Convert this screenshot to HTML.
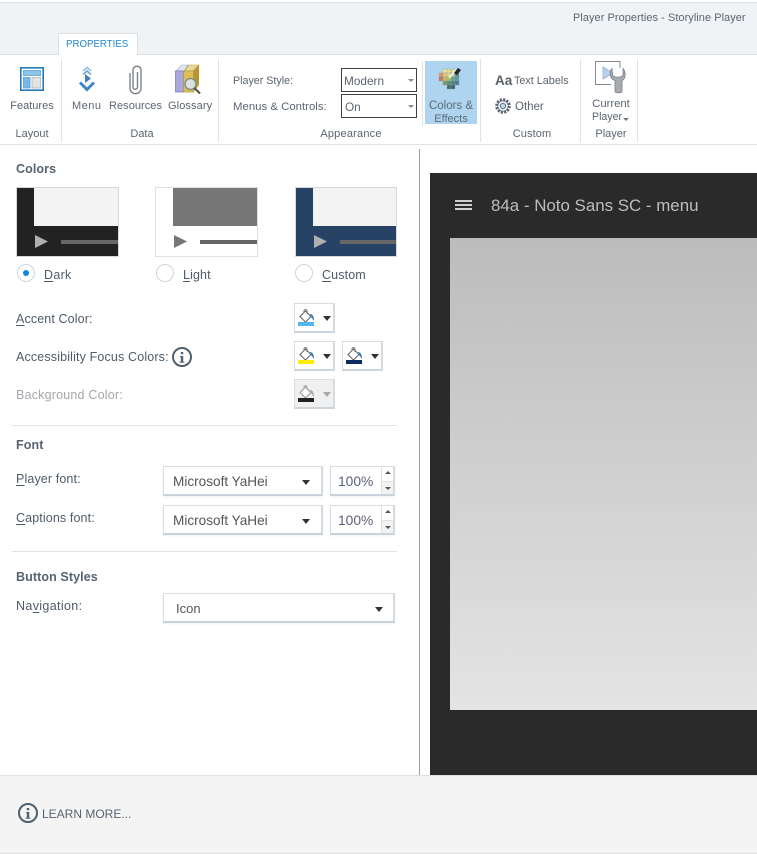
<!DOCTYPE html>
<html><head><meta charset="utf-8">
<style>
html,body{margin:0;padding:0;background:#fff}
#p{position:relative;width:757px;height:854px;overflow:hidden;background:#fff;font-family:"Liberation Sans",sans-serif;color:#4f5b68}
#p div,#p svg,#p span.t{position:absolute}
.t{white-space:nowrap;line-height:16px;height:16px;margin-top:1px}
.r{font-size:11px;color:#5b6570}
.c{text-align:center}
.l{font-size:12.5px;color:#4f5b68;letter-spacing:.12px}
.h{font-size:12.5px;font-weight:bold;color:#566472;letter-spacing:.1px}
.sel{border:1px solid #d8dde2;border-right:2px solid #d5dbe1;border-bottom:2px solid #c9d2da;background:#fff;box-sizing:border-box;box-shadow:0 1px 2px #eef1f4}
.btn{border:1px solid #d8dde2;border-right:2px solid #d5dbe1;border-bottom:2px solid #cdd5dc;background:#fff;box-sizing:border-box}
.car{width:0;height:0;border-left:4.5px solid transparent;border-right:4.5px solid transparent;border-top:5px solid #333}
.rs{border:1px solid #3f3f3f;background:#fff;box-sizing:border-box}
.sm{width:0;height:0;border-left:3px solid transparent;border-right:3px solid transparent;border-top:3px solid #8a8a8a}
.sep{width:1px;background:#dfe3e6;top:59px;height:83px}
.rad{width:18px;height:18px;border-radius:50%;border:1px solid #cdd6de;box-sizing:border-box;background:#fff;top:264px}
u{text-underline-offset:2px}
</style></head><body>
<div id="p">
<!-- title / tab strip -->
<div style="left:0;top:2px;width:757px;height:1px;background:#e2e5e8"></div>
<div style="left:0;top:3px;width:757px;height:51px;background:#f0f3f6"></div>
<div style="left:0;top:54px;width:757px;height:1px;background:#dce0e4"></div>
<span class="t r" style="left:573px;top:9px;font-size:11px;letter-spacing:.04px">Player Properties - Storyline Player</span>
<div style="left:58px;top:33px;width:80px;height:22px;background:#fff;border:1px solid #dce0e4;border-bottom:none;box-sizing:border-box"></div>
<span class="t" style="left:66px;top:36px;font-size:9.7px;color:#1f87cc">PROPERTIES</span>
<!-- ribbon -->
<div style="left:0;top:144px;width:757px;height:1px;background:#dfe3e6"></div>
<div class="sep" style="left:61px"></div><div class="sep" style="left:218px"></div><div class="sep" style="left:422px;height:65px;top:61px"></div><div class="sep" style="left:480px"></div><div class="sep" style="left:580px"></div><div class="sep" style="left:637px"></div>

<!-- Features icon -->
<svg style="left:20px;top:67px" width="24" height="24" viewBox="0 0 24 24"><rect x=".8" y=".8" width="22.400" height="22.400" fill="#fff" stroke="#1f7cb6" stroke-width="1.600"/><rect x="3.500" y="3.500" width="17" height="5" fill="#8cc4ea" stroke="#5a9fd0" stroke-width=".8"/><rect x="3.500" y="10.500" width="6.500" height="10.500" fill="#78b7e6" stroke="#5a9fd0" stroke-width=".8"/><rect x="12" y="10.500" width="8.500" height="10.500" fill="#e3e3e3" stroke="#b5b5b5" stroke-width=".8"/></svg>
<span class="t r c" style="left:2px;width:60px;top:97px">Features</span>
<span class="t r c" style="left:2px;width:60px;top:125px">Layout</span>

<!-- Menu icon -->
<svg style="left:78px;top:66px" width="18" height="26" viewBox="0 0 18 26"><path d="M5 5 L9 1.500 L13 5" fill="none" stroke="#9cc4e4" stroke-width="1.800"/><path d="M5 8.500 L9 5 L13 8.500" fill="none" stroke="#74aad6" stroke-width="1.800"/><path d="M7 8 L13 12.500 L7 17Z" fill="#3f80b8"/><path d="M2 16.500 L9 23.500 L16 16.500" fill="none" stroke="#3f86c4" stroke-width="3"/></svg>
<span class="t r" style="left:72px;top:97px;letter-spacing:.5px">Menu</span>

<!-- Paperclip -->
<svg style="left:128px;top:64px" width="15" height="31" viewBox="0 0 15 31"><path d="M9.500 8 V23 C9.500 26 5 26 5 23 V6 C5 1 13 1 13 6 V24 C13 31.500 2 31.500 2 24 V9" fill="none" stroke="#7c8287" stroke-width="1.400"/></svg>
<span class="t r" style="left:109px;top:97px;letter-spacing:.05px">Resources</span>

<!-- Glossary -->
<svg style="left:174px;top:63px" width="28" height="32" viewBox="0 0 28 32"><path d="M2 8 L8 2 H14 L10 8Z" fill="#dfe3f2" stroke="#a2a6c8" stroke-width=".6"/><rect x="1.500" y="8" width="8" height="21" fill="#a9a9e0" stroke="#7f7fb8" stroke-width=".8"/><path d="M10 8 L15 2 H25 L19 8Z" fill="#e8d89a" stroke="#b39b45" stroke-width=".6"/><rect x="9.500" y="8" width="10" height="21" fill="#dcc05a" stroke="#b39b45" stroke-width=".8"/><path d="M19.500 8 L25 2 V22 L19.500 29Z" fill="#b8952e"/><circle cx="16.500" cy="21" r="5.500" fill="#d8e6ea" fill-opacity=".9" stroke="#7a8a8c" stroke-width="1.300"/><path d="M20.500 25 L26 30.500" stroke="#555" stroke-width="2.200"/></svg>
<span class="t r" style="left:168px;top:97px;letter-spacing:.1px">Glossary</span>
<span class="t r c" style="left:62px;width:160px;top:125px">Data</span>

<!-- Appearance -->
<span class="t r" style="left:233px;top:72px;font-size:10.7px">Player Style:</span>
<span class="t r" style="left:233px;top:98px;font-size:11.4px">Menus &amp; Controls:</span>
<div class="rs" style="left:341px;top:68px;width:76px;height:24px"></div>
<span class="t r" style="left:344px;top:72px;font-size:11.800px">Modern</span>
<div class="sm" style="left:408px;top:79px"></div>
<div class="rs" style="left:341px;top:94px;width:76px;height:24px"></div>
<span class="t r" style="left:345px;top:98px;font-size:11.800px">On</span>
<div class="sm" style="left:408px;top:105px"></div>
<span class="t r c" style="left:280px;width:142px;top:125px;letter-spacing:.2px">Appearance</span>

<div style="left:425px;top:61px;width:52px;height:63px;background:#aed4f0"></div>
<svg style="left:437px;top:65px" width="26" height="26" viewBox="0 0 26 26">
<g stroke="#8a9aa8" stroke-width=".35"><rect x="6" y="4" width="4" height="4" fill="#f2e49a"/><rect x="10" y="4" width="4" height="4" fill="#e6e28e"/><rect x="14" y="4" width="4" height="4" fill="#cfe09a"/>
<rect x="2" y="8" width="4" height="4" fill="#e2985e"/><rect x="6" y="8" width="4" height="4" fill="#ecc86e"/><rect x="10" y="8" width="4" height="4" fill="#e4de7e"/><rect x="14" y="8" width="4" height="4" fill="#a8cc8a"/><rect x="18" y="8" width="4" height="4" fill="#6a8a8a"/>
<rect x="2" y="12" width="4" height="4" fill="#c8775e"/><rect x="6" y="12" width="4" height="4" fill="#d0bc5e"/><rect x="10" y="12" width="4" height="4" fill="#a8c45e"/><rect x="14" y="12" width="4" height="4" fill="#62a88a"/><rect x="18" y="12" width="4" height="4" fill="#5a9aa0"/>
<rect x="6" y="16" width="4" height="4" fill="#7a9a5a"/><rect x="10" y="16" width="4" height="4" fill="#5a8f70"/><rect x="14" y="16" width="4" height="4" fill="#4a8585"/><rect x="18" y="16" width="4" height="4" fill="#4a7a8c"/>
<rect x="10" y="20" width="4" height="4" fill="#4a6f5e"/><rect x="14" y="20" width="4" height="4" fill="#3f6668"/></g>
<path d="M12 13 L19 5" stroke="#eee" stroke-width="2"/><path d="M17 8 L21 3 L24 5 L20 10Z" fill="#222"/></svg>
<span class="t r c" style="left:425px;width:52px;top:97px;color:#5a6a78;font-size:11.5px">Colors &amp;</span>
<span class="t r c" style="left:425px;width:52px;top:110px;color:#5a6a78;font-size:11px">Effects</span>

<!-- Custom -->
<span class="t" style="left:495px;top:72px;font-size:13.500px;font-weight:bold;color:#5a5f64">Aa</span>
<span class="t r" style="left:514px;top:72px;font-size:10.800px">Text Labels</span>
<svg style="left:495px;top:98px" width="16" height="16" viewBox="0 0 16 16"><circle cx="8" cy="8" r="6.600" fill="none" stroke="#5a6672" stroke-width="2.400" stroke-dasharray="2.200 1.250"/><circle cx="8" cy="8" r="5.200" fill="#fff" stroke="#5a6672" stroke-width=".8"/><circle cx="8" cy="8" r="2.700" fill="#c8d6e4" stroke="#5a7a9a" stroke-width="1.100"/></svg>
<span class="t r" style="left:515px;top:98px;font-size:11.500px">Other</span>
<span class="t r c" style="left:482px;width:100px;top:125px;letter-spacing:.1px">Custom</span>

<!-- Player -->
<svg style="left:594px;top:60px" width="34" height="34" viewBox="0 0 34 34"><path d="M17 24.500 H1.500 V1.500 H26 V8" fill="#fff" stroke="#85898d" stroke-width="1"/><path d="M9 7 L19 13 L9 19Z" fill="#b8d2ea" stroke="#8eb0d0" stroke-width=".8"/><path d="M18 8.500 C15 12 15.500 19 21 20.500 V31 C21 33.500 28 33.500 28 31 V20.500 C32 19 32 12 29 8.500 V14.500 C29 18 18.500 18 18.500 14.500Z" fill="#a6abb0" stroke="#7c8186" stroke-width=".8"/></svg>
<span class="t r c" style="left:581px;width:60px;top:95px;font-size:11.300px">Current</span>
<span class="t r" style="left:592px;top:108px;font-size:10.600px">Player</span>
<div style="left:623px;top:118px;width:0;height:0;border-left:3px solid transparent;border-right:3px solid transparent;border-top:3px solid #777"></div>
<span class="t r c" style="left:581px;width:60px;top:125px">Player</span>

<!-- Left panel -->
<span class="t h" style="left:16px;top:160px">Colors</span>

<div style="left:16px;top:187px;width:103px;height:70px;background:#222;box-sizing:border-box;border:1px solid #d8d8d8"></div>
<div style="left:34px;top:188px;width:84px;height:38px;background:#f3f3f3"></div>
<svg style="left:34px;top:234px" width="14" height="15"><path d="M1 1 L14 7.500 L1 14Z" fill="#b0b0b0"/></svg>
<div style="left:61px;top:240px;width:57px;height:4px;background:#666"></div>

<div style="left:155px;top:187px;width:103px;height:70px;background:#fff;box-sizing:border-box;border:1px solid #dfdfdf"></div>
<div style="left:173px;top:188px;width:84px;height:38px;background:#777"></div>
<svg style="left:173px;top:234px" width="14" height="15"><path d="M1 1 L14 7.500 L1 14Z" fill="#777"/></svg>
<div style="left:200px;top:240px;width:57px;height:4px;background:#666"></div>

<div style="left:295px;top:187px;width:102px;height:70px;background:#264265;box-sizing:border-box;border:1px solid #d8d8d8"></div>
<div style="left:313px;top:188px;width:83px;height:38px;background:#f3f3f3"></div>
<svg style="left:313px;top:234px" width="14" height="15"><path d="M1 1 L14 7.500 L1 14Z" fill="#b0b0b0"/></svg>
<div style="left:340px;top:240px;width:56px;height:4px;background:#666"></div>

<div class="rad" style="left:17px"></div><div style="left:23px;top:270px;width:6px;height:6px;border-radius:50%;background:#0f82dc"></div>
<div class="rad" style="left:156px"></div>
<div class="rad" style="left:295px"></div>
<span class="t l" style="left:44px;top:266px;letter-spacing:.3px"><u>D</u>ark</span>
<span class="t l" style="left:183px;top:266px"><u>L</u>ight</span>
<span class="t l" style="left:322px;top:266px"><u>C</u>ustom</span>

<span class="t l" style="left:16px;top:310px"><u>A</u>ccent Color:</span>
<span class="t l" style="left:16px;top:348px;letter-spacing:.15px">Accessibility Focus Colors:</span>
<span class="t l" style="left:16px;top:386px;color:#a3a7ab;letter-spacing:.2px">Background Color:</span>

<svg style="left:171px;top:346px" width="22" height="22" viewBox="0 0 22 22"><circle cx="11" cy="11" r="9" fill="none" stroke="#4e606e" stroke-width="2"/><path d="M9.800 6 h2.400 v2.200 h-2.400z M9 10 h3.200 v5.800 h1.200 v.9 h-4.800 v-.9 h1.200 v-4.900 h-.8z" fill="#4e606e"/></svg>

<!-- Colour buttons -->
<div class="btn" style="left:294px;top:303px;width:41px;height:30px"></div>
<svg style="left:298px;top:308px" width="18" height="14" viewBox="0 0 18 14"><path d="M2 8.500 L7.500 3 L13 8.500 L7.500 14Z" fill="#fff" stroke="#666" stroke-width="1.100"/><path d="M6 5 V2.500 Q7.500 .5 9 2.500 V6" fill="none" stroke="#777"/><path d="M12 6 Q16 6 16 13 L13 9Z" fill="#3a7fc0"/></svg>
<div style="left:298px;top:322px;width:16px;height:4px;background:#55b5ee"></div>
<div class="car" style="left:323px;top:316px"></div>

<div class="btn" style="left:294px;top:341px;width:41px;height:30px"></div>
<svg style="left:298px;top:346px" width="18" height="14" viewBox="0 0 18 14"><path d="M2 8.500 L7.500 3 L13 8.500 L7.500 14Z" fill="#fff" stroke="#666" stroke-width="1.100"/><path d="M6 5 V2.500 Q7.500 .5 9 2.500 V6" fill="none" stroke="#777"/><path d="M12 6 Q16 6 16 13 L13 9Z" fill="#3a7fc0"/></svg>
<div style="left:298px;top:360px;width:16px;height:4px;background:#ffee00"></div>
<div class="car" style="left:323px;top:354px"></div>

<div class="btn" style="left:342px;top:341px;width:41px;height:30px"></div>
<svg style="left:346px;top:346px" width="18" height="14" viewBox="0 0 18 14"><path d="M2 8.500 L7.500 3 L13 8.500 L7.500 14Z" fill="#fff" stroke="#666" stroke-width="1.100"/><path d="M6 5 V2.500 Q7.500 .5 9 2.500 V6" fill="none" stroke="#777"/><path d="M12 6 Q16 6 16 13 L13 9Z" fill="#3a7fc0"/></svg>
<div style="left:346px;top:360px;width:16px;height:4px;background:#0b2a5e"></div>
<div class="car" style="left:371px;top:354px"></div>

<div class="btn" style="left:294px;top:379px;width:41px;height:30px;background:#f0f0f0"></div>
<svg style="left:298px;top:384px" width="18" height="14" viewBox="0 0 18 14"><path d="M2 8.500 L7.500 3 L13 8.500 L7.500 14Z" fill="#fff" stroke="#999" stroke-width="1.100"/><path d="M6 5 V2.500 Q7.500 .5 9 2.500 V6" fill="none" stroke="#aaa"/><path d="M12 6 Q16 6 16 13 L13 9Z" fill="#aaa"/></svg>
<div style="left:298px;top:398px;width:16px;height:4px;background:#222"></div>
<div class="car" style="left:323px;top:392px;border-top-color:#aaa"></div>

<div style="left:12px;top:425px;width:385px;height:1px;background:#e0e4e8"></div>
<span class="t h" style="left:16px;top:436px">Font</span>
<span class="t l" style="left:16px;top:470px"><u>P</u>layer font:</span>
<span class="t l" style="left:16px;top:509px"><u>C</u>aptions font:</span>

<div class="sel" style="left:163px;top:466px;width:160px;height:30px"></div>
<span class="t" style="left:173px;top:473px;font-size:13.600px;color:#555">Microsoft YaHei</span>
<div class="car" style="left:302px;top:480px"></div>
<div class="sel" style="left:330px;top:466px;width:65px;height:30px"></div>
<span class="t" style="left:338px;top:473px;font-size:13.800px;color:#5a5f78">100%</span>
<div style="left:381px;top:467px;width:1px;height:27px;background:#dde2e6"></div><div style="left:382px;top:481px;width:11px;height:1px;background:#dde2e6"></div><div style="left:382px;top:482px;width:11px;height:12px;background:#f2f2f2"></div>
<div style="left:385px;top:471px;width:0;height:0;border-left:3px solid transparent;border-right:3px solid transparent;border-bottom:3px solid #555"></div>
<div style="left:385px;top:487px;width:0;height:0;border-left:3px solid transparent;border-right:3px solid transparent;border-top:3px solid #555"></div>

<div class="sel" style="left:163px;top:505px;width:160px;height:30px"></div>
<span class="t" style="left:173px;top:512px;font-size:13.600px;color:#555">Microsoft YaHei</span>
<div class="car" style="left:302px;top:519px"></div>
<div class="sel" style="left:330px;top:505px;width:65px;height:30px"></div>
<span class="t" style="left:338px;top:512px;font-size:13.800px;color:#5a5f78">100%</span>
<div style="left:381px;top:506px;width:1px;height:27px;background:#dde2e6"></div><div style="left:382px;top:520px;width:11px;height:1px;background:#dde2e6"></div><div style="left:382px;top:521px;width:11px;height:12px;background:#f2f2f2"></div>
<div style="left:385px;top:510px;width:0;height:0;border-left:3px solid transparent;border-right:3px solid transparent;border-bottom:3px solid #555"></div>
<div style="left:385px;top:526px;width:0;height:0;border-left:3px solid transparent;border-right:3px solid transparent;border-top:3px solid #555"></div>

<div style="left:12px;top:551px;width:385px;height:1px;background:#e0e4e8"></div>
<span class="t h" style="left:16px;top:568px">Button Styles</span>
<span class="t l" style="left:16px;top:597px;letter-spacing:.35px">Na<u>v</u>igation:</span>
<div class="sel" style="left:163px;top:593px;width:232px;height:30px"></div>
<span class="t" style="left:176px;top:600px;font-size:13px;color:#555">Icon</span>
<div class="car" style="left:375px;top:607px"></div>

<!-- divider + preview -->
<div style="left:419px;top:149px;width:1px;height:626px;background:#9a9da0"></div>
<div style="left:430px;top:173px;width:327px;height:602px;background:#2a2a2a"></div>
<div style="left:455px;top:200px;width:17px;height:2px;background:#d0d0d0"></div>
<div style="left:455px;top:204px;width:17px;height:2px;background:#d0d0d0"></div>
<div style="left:455px;top:208px;width:17px;height:2px;background:#d0d0d0"></div>
<span class="t" style="left:491px;top:197px;font-size:16.900px;color:#bdbdbd">84a - Noto Sans SC - menu</span>
<div style="left:450px;top:238px;width:307px;height:472px;background:linear-gradient(#bcbcbc,#e4e4e4)"></div>

<!-- footer -->
<div style="left:0;top:775px;width:757px;height:79px;background:#f4f4f4"></div>
<div style="left:0;top:775px;width:757px;height:1px;background:#e0e0e0"></div>
<div style="left:0;top:853px;width:757px;height:1px;background:#e0e0e0"></div>
<svg style="left:17px;top:802px" width="22" height="22" viewBox="0 0 22 22"><circle cx="11" cy="11" r="9" fill="none" stroke="#4e606e" stroke-width="2"/><path d="M9.800 6 h2.400 v2.200 h-2.400z M9 10 h3.200 v5.800 h1.200 v.9 h-4.800 v-.9 h1.200 v-4.900 h-.8z" fill="#4e606e"/></svg>
<span class="t" style="left:42px;top:805px;font-size:12px;color:#566470">LEARN MORE...</span>
</div>
</body></html>
